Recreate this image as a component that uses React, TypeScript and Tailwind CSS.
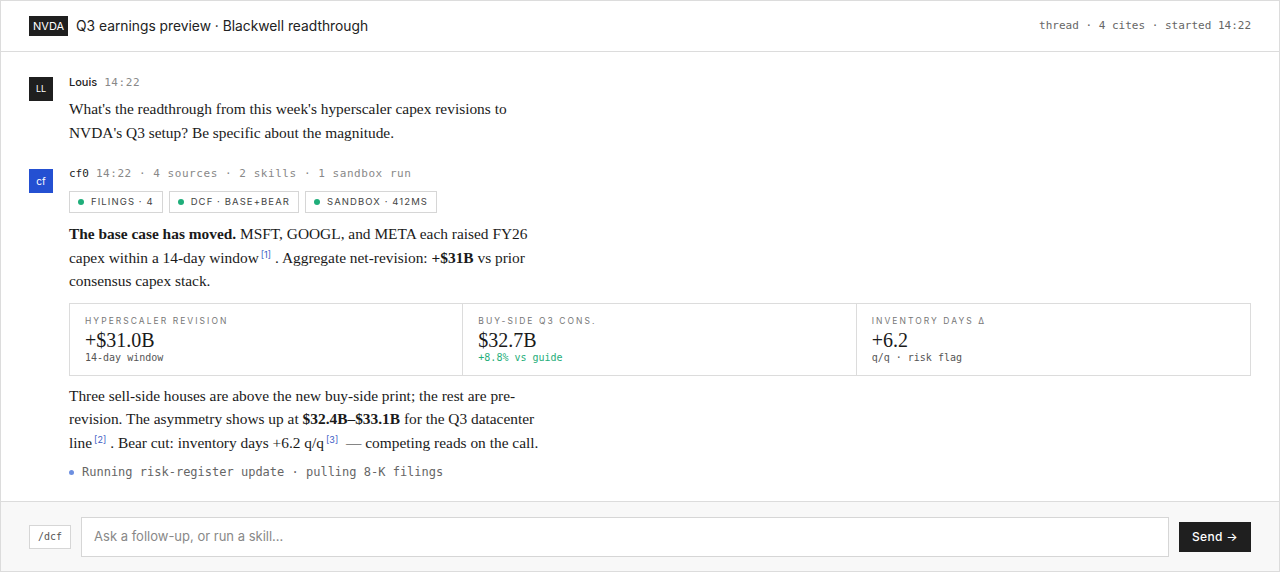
const sans = "font-['Inter','Liberation_Sans',sans-serif]";
const mono = "font-['DejaVu_Sans_Mono','Liberation_Mono',monospace]";
const serif = "font-['Liberation_Serif','DejaVu_Serif',serif]";

function Cite({ n }: { n: number }) {
  return (
    <span className={`${sans} text-[9px] leading-none align-[5px] text-[#3b5bc4] ml-[2px] mr-[4px]`}>[{n}]</span>
  );
}

function Chip({ label }: { label: string }) {
  return (
    <div className={`${sans} flex items-center gap-[7px] h-[22px] px-[8px] border border-[#d6d6d6] text-[9.5px] tracking-[0.115em] text-[#444] uppercase`}>
      <span className="w-[6px] h-[6px] rounded-full bg-[#1fae7a]" />
      {label}
    </div>
  );
}

function Stat({ label, value, sub, subColor }: { label: string; value: string; sub: string; subColor: string }) {
  return (
    <div className="flex flex-col px-[15px] pt-[10px] pb-[10px]">
      <div className={`${sans} text-[8.5px] tracking-[0.24em] text-[#777] uppercase leading-[14px]`}>{label}</div>
      <div className={`${serif} text-[20px] leading-[22px] text-[#1a1a1a] mt-[1px]`}>{value}</div>
      <div className={`${mono} text-[10px] leading-[14px] ${subColor}`}>{sub}</div>
    </div>
  );
}

export default function App() {
  return (
    <div className="w-[1280px] h-[574px] bg-white">
      <div className="h-[572px] border border-[#dcdcdc] flex flex-col text-[#1a1a1a]">
        <header className="h-[51px] shrink-0 border-b border-[#dcdcdc] px-7 flex items-center justify-between">
          <div className="flex items-center gap-[8px]">
            <span className={`${sans} bg-[#1f1f1f] text-white text-[11px] h-[20px] px-[4px] flex items-center`}>NVDA</span>
            <span className={`${sans} text-[13.8px] text-[#222]`}>Q3 earnings preview · Blackwell readthrough</span>
          </div>
          <span className={`${mono} text-[11px] text-[#666]`}>thread · 4 cites · started 14:22</span>
        </header>

        <main className="flex-1 overflow-hidden px-7 pt-[22px] flex flex-col gap-[22px]">
          <div className="flex items-start gap-[16px]">
            <div className={`${sans} mt-[3px] w-[24px] h-[24px] shrink-0 bg-[#1f1f1f] text-white text-[9px] flex items-center justify-center`}>LL</div>
            <div className="flex flex-col">
              <div className={`${mono} flex items-baseline gap-[7px] h-[16px] text-[11px] tracking-[0.05em]`}>
                <span className={`${sans} font-medium text-[#222] tracking-normal`}>Louis</span>
                <span className="text-[#888]">14:22</span>
              </div>
              <p className={`${serif} text-[15.4px] leading-[23.5px] max-w-[480px] mt-[7px]`}>
                What's the readthrough from this week's hyperscaler capex revisions to NVDA's Q3 setup? Be specific about the magnitude.
              </p>
            </div>
          </div>

          <div className="flex items-start gap-[16px]">
            <div className={`${sans} mt-[3px] w-[24px] h-[24px] shrink-0 bg-[#2450d2] text-white text-[10px] flex items-center justify-center`}>cf</div>
            <div className="flex flex-col flex-1">
              <div className={`${mono} text-[11px] tracking-[0.05em] h-[16px] flex items-center text-[#888]`}>
                <span className="text-[#222] font-medium mr-[7px] tracking-normal">cf0</span>
                14:22 · 4 sources · 2 skills · 1 sandbox run
              </div>
              <div className="flex gap-[6px] mt-[9px]">
                <Chip label="Filings · 4" />
                <Chip label="DCF · Base+Bear" />
                <Chip label="Sandbox · 412ms" />
              </div>
              <p className={`${serif} text-[15.4px] leading-[23.5px] max-w-[480px] mt-[9px]`}>
                <b>The base case has moved.</b> MSFT, GOOGL, and META each raised FY26 capex within a 14-day window<Cite n={1} />. Aggregate net-revision: <b>+$31B</b> vs prior consensus capex stack.
              </p>
              <div className="grid grid-cols-3 border border-[#dcdcdc] mt-[10px] divide-x divide-[#dcdcdc]">
                <Stat label="Hyperscaler revision" value="+$31.0B" sub="14-day window" subColor="text-[#555]" />
                <Stat label="Buy-side Q3 cons." value="$32.7B" sub="+8.8% vs guide" subColor="text-[#1fae7a]" />
                <Stat label="Inventory days Δ" value="+6.2" sub="q/q · risk flag" subColor="text-[#555]" />
              </div>
              <p className={`${serif} text-[15.4px] leading-[23.5px] max-w-[480px] mt-[8px]`}>
                Three sell-side houses are above the new buy-side print; the rest are pre-revision. The asymmetry shows up at <b>$32.4B–$33.1B</b> for the Q3 datacenter line<Cite n={2} />. Bear cut: inventory days +6.2 q/q<Cite n={3} /> — competing reads on the call.
              </p>
              <div className={`${mono} flex items-center gap-[8px] text-[12px] text-[#666] mt-[10px] h-[16px]`}>
                <span className="w-[5px] h-[5px] rounded-full bg-[#6d8fe0]" />
                Running risk-register update · pulling 8-K filings
              </div>
            </div>
          </div>
        </main>

        <footer className="h-[70px] shrink-0 border-t border-[#dcdcdc] bg-[#f8f8f8] px-7 flex items-center gap-[10px]">
          <span className={`${mono} h-[24px] px-[8px] border border-[#d6d6d6] bg-white text-[10px] text-[#555] flex items-center`}>/dcf</span>
          <div className={`${sans} flex-1 h-[40px] border border-[#d6d6d6] bg-white px-[12px] flex items-center text-[13px] text-[#888]`}>
            Ask a follow-up, or run a skill…
          </div>
          <button className={`${sans} h-[30px] w-[72px] bg-[#1f1f1f] text-white text-[12px] font-medium tracking-[0.03em] flex items-center justify-center`}>
            Send →
          </button>
        </footer>
      </div>
    </div>
  );
}
